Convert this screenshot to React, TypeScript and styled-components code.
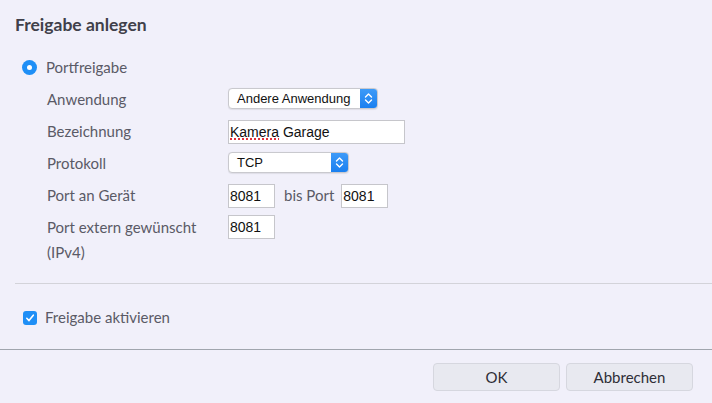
import React from "react";
import styled, { createGlobalStyle } from "styled-components";

const Global = createGlobalStyle`
  html, body { margin: 0; padding: 0; background: #f1f0fa; }
  * { box-sizing: border-box; }
`;

const Page = styled.div`
  width: 712px;
  height: 403px;
  display: flex;
  flex-direction: column;
  background: #f1f0fa;
  font-family: Lato, "Open Sans", sans-serif;
  color: #5a5a66;
  overflow: hidden;
`;

const Title = styled.h1`
  margin: 0;
  padding: 15px 15px 0;
  font-size: 17.5px;
  line-height: 20px;
  font-weight: 700;
  color: #40404a;
`;

const Form = styled.div`
  display: flex;
  flex-direction: column;
  gap: 7px;
  padding: 20px 0 0 22px;
`;

const OptionRow = styled.label`
  display: flex;
  align-items: center;
  gap: 9px;
  font-size: 15px;
  line-height: 25px;
`;

const Radio = styled.span`
  width: 15px;
  height: 15px;
  border-radius: 50%;
  background: #1f8ff6;
  display: flex;
  align-items: center;
  justify-content: center;
  &::after {
    content: "";
    width: 5px;
    height: 5px;
    border-radius: 50%;
    background: #fff;
  }
`;

const Grid = styled.div`
  display: grid;
  grid-template-columns: 181px auto;
  row-gap: 7px;
  padding-left: 25px;
  justify-items: start;
`;

const Label = styled.div`
  font-size: 15px;
  line-height: 25px;
`;

const Controls = styled.div<{ $top?: boolean }>`
  display: flex;
  align-items: center;
  align-self: ${(p) => (p.$top ? "start" : "center")};
`;

const Select = styled.div<{ $w: number }>`
  width: ${(p) => p.$w}px;
  height: 21px;
  margin-top: -3px;
  display: flex;
  align-items: stretch;
  background: #fff;
  border: 1px solid #c9c9ce;
  border-radius: 4px;
  box-shadow: 0 0.5px 1px rgba(0, 0, 0, 0.08);
  overflow: hidden;
  font-family: "Liberation Sans", Arial, sans-serif;
  font-size: 13px;
  color: #111;
`;

const SelectText = styled.span`
  flex: 1;
  padding-left: 8px;
  line-height: 19px;
  white-space: nowrap;
`;

const Stepper = styled.span`
  width: 17px;
  background: linear-gradient(#3d9bf8, #1a7ff0);
  display: flex;
  align-items: center;
  justify-content: center;
`;

const Field = styled.div<{ $w: number }>`
  width: ${(p) => p.$w}px;
  height: 24px;
  background: #fff;
  border: 1px solid #c6c6cb;
  padding-left: 1px;
  font-family: "Liberation Sans", Arial, sans-serif;
  font-size: 14px;
  line-height: 22px;
  color: #111;
  white-space: nowrap;
`;

const Misspelled = styled.span`
  text-decoration: underline dotted #e0303a;
  text-decoration-thickness: 2px;
  text-underline-offset: 2px;
`;

const Inline = styled.span`
  font-size: 15px;
  line-height: 25px;
  margin: 0 7px 0 9px;
`;

const Divider = styled.div`
  height: 1px;
  background: #d3d3d9;
  margin: 18px 0 0 15px;
`;

const CheckRow = styled.label`
  display: flex;
  align-items: center;
  gap: 8px;
  margin: 21px 0 0 23px;
  font-size: 15px;
  line-height: 25px;
`;

const Checkbox = styled.span`
  width: 14px;
  height: 14px;
  border-radius: 3px;
  background: #1f8ff6;
  display: flex;
  align-items: center;
  justify-content: center;
`;

const FooterLine = styled.div`
  height: 1px;
  background: #a0a5ad;
  margin-top: 19px;
`;

const Footer = styled.div`
  display: flex;
  justify-content: flex-end;
  gap: 6px;
  padding: 13px 19px 0 0;
`;

const Button = styled.button`
  width: 127px;
  height: 28px;
  background: #e8e9f0;
  border: 1px solid #d6d7df;
  border-radius: 4px;
  font-family: Lato, "Open Sans", sans-serif;
  font-size: 15px;
  color: #2e2e36;
  padding: 0;
`;

const Chevrons = () => (
  <svg width="9" height="13" viewBox="0 0 9 13">
    <path d="M1.5 5 L4.5 2 L7.5 5 M1.5 8 L4.5 11 L7.5 8" fill="none" stroke="#fff" strokeWidth="1.4" strokeLinecap="round" strokeLinejoin="round" />
  </svg>
);

const Tick = () => (
  <svg width="10" height="10" viewBox="0 0 10 10">
    <path d="M1.8 5.3 L4 7.6 L8.3 2.2" fill="none" stroke="#fff" strokeWidth="1.6" strokeLinecap="round" strokeLinejoin="round" />
  </svg>
);

export default function App() {
  return (
    <Page>
      <Global />
      <Title>Freigabe anlegen</Title>
      <Form>
        <OptionRow>
          <Radio />
          Portfreigabe
        </OptionRow>
        <Grid>
          <Label>Anwendung</Label>
          <Controls>
            <Select $w={150}>
              <SelectText>Andere Anwendung</SelectText>
              <Stepper><Chevrons /></Stepper>
            </Select>
          </Controls>
          <Label>Bezeichnung</Label>
          <Controls>
            <Field $w={177}>
              <Misspelled>Kamera</Misspelled> Garage
            </Field>
          </Controls>
          <Label>Protokoll</Label>
          <Controls>
            <Select $w={121}>
              <SelectText>TCP</SelectText>
              <Stepper><Chevrons /></Stepper>
            </Select>
          </Controls>
          <Label>Port an Gerät</Label>
          <Controls>
            <Field $w={47}>8081</Field>
            <Inline>bis Port</Inline>
            <Field $w={47}>8081</Field>
          </Controls>
          <Label>
            Port extern gewünscht
            <br />
            (IPv4)
          </Label>
          <Controls $top>
            <Field $w={47}>8081</Field>
          </Controls>
        </Grid>
      </Form>
      <Divider />
      <CheckRow>
        <Checkbox><Tick /></Checkbox>
        Freigabe aktivieren
      </CheckRow>
      <FooterLine />
      <Footer>
        <Button>OK</Button>
        <Button>Abbrechen</Button>
      </Footer>
    </Page>
  );
}
